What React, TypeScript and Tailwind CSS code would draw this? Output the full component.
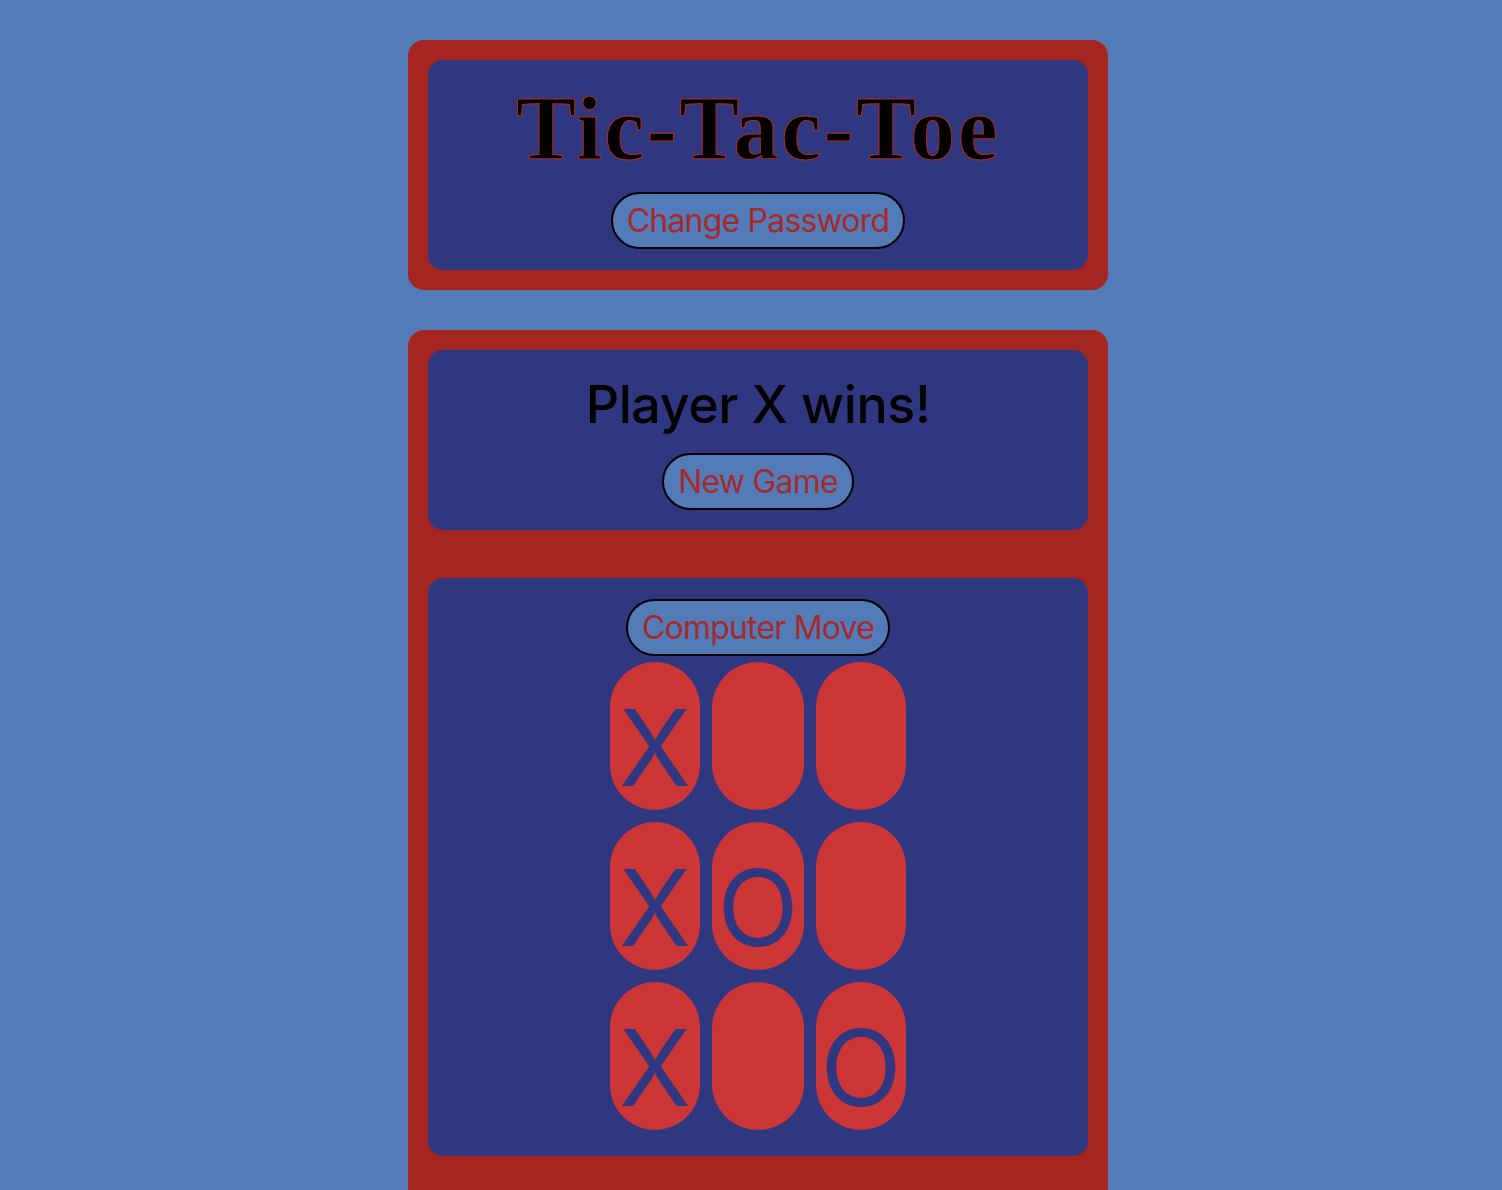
import React from "react";

const btn =
  "h-[57px] px-[14px] rounded-full border-2 border-black bg-[#527bb8] text-[#a52a2a] text-[32px] tracking-[-0.8px] leading-none flex items-center justify-center";

export default function App() {
  const board = [
    ["X", "", ""],
    ["X", "O", ""],
    ["X", "", "O"],
  ];
  return (
    <div
      className="min-h-[1190px] bg-[#527bb8] pt-[40px] pl-[14px] flex flex-col items-center"
      style={{ fontFamily: "Inter, 'Noto Sans', sans-serif" }}
    >
      <div className="w-[700px] bg-[#a52620] rounded-[16px] p-[20px]">
        <div className="bg-[#2e3780] rounded-[15px] pt-[24px] pb-[21px] flex flex-col items-center">
          <h1
            className="text-[90px] leading-none font-bold text-black tracking-[2.5px] [-webkit-text-stroke:1px_#b22a22]"
            style={{ fontFamily: "'Liberation Serif', serif" }}
          >
            Tic-Tac-Toe
          </h1>
          <button className={btn + " mt-[18px]"}>Change Password</button>
        </div>
      </div>

      <div className="w-[700px] bg-[#a52620] rounded-[16px] p-[20px] pb-[60px] mt-[40px]">
        <div className="bg-[#2e3780] rounded-[15px] pt-[29px] pb-[20px] flex flex-col items-center">
          <h2 className="text-[52px] leading-none font-medium tracking-[-0.4px] text-black">Player X wins!</h2>
          <button className={btn + " mt-[22px]"}>New Game</button>
        </div>
        <div className="bg-[#2e3780] rounded-[15px] mt-[48px] pt-[21px] pb-[26px] flex flex-col items-center">
          <button className={btn}>Computer Move</button>
          <div className="mt-[6px] grid grid-cols-[90px_92px_90px] gap-[12px]">
            {board.flat().map((v, i) => (
              <div
                key={i}
                className="h-[148px] rounded-full bg-[#cc3636] flex items-center justify-center pt-[23px] text-[#2e3780] text-[106px] leading-none"
              >
                {v}
              </div>
            ))}
          </div>
        </div>
      </div>
    </div>
  );
}
